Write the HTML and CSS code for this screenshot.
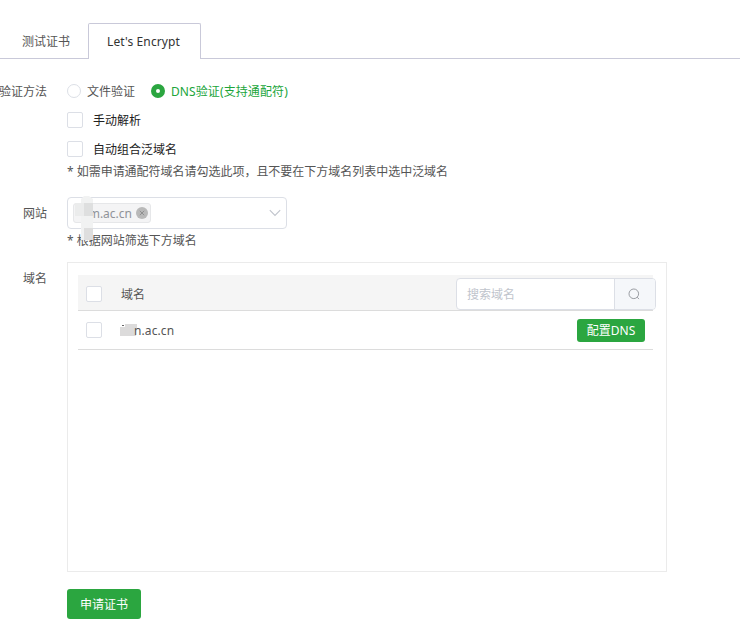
FILE: index.html
```
<!DOCTYPE html>
<html lang="zh-CN">
<head>
<meta charset="utf-8">
<title>Let's Encrypt</title>
<link rel="stylesheet" href="styles.css">
</head>
<body>
<nav class="tabs">
  <a class="tab">测试证书</a>
  <a class="tab tab-active">Let's Encrypt</a>
</nav>
<form class="form">
  <div class="row row-method">
    <div class="label">验证方法</div>
    <div class="content">
      <div class="radios">
        <span class="radio"><i class="dot"></i>文件验证</span>
        <span class="radio radio-on"><i class="dot"></i>DNS验证(支持通配符)</span>
      </div>
      <div class="check-line"><i class="check"></i><span>手动解析</span></div>
      <div class="check-line"><i class="check"></i><span>自动组合泛域名</span></div>
      <div class="hint">* 如需申请通配符域名请勾选此项，且不要在下方域名列表中选中泛域名</div>
    </div>
  </div>
  <div class="row row-site">
    <div class="label">网站</div>
    <div class="content">
      <div class="select">
        <span class="tag"><span class="tag-text">m.ac.cn</span>
          <svg class="close" viewBox="0 0 12 12"><circle cx="6" cy="6" r="6" fill="#b9b9b9"/><path d="M3.8 3.8l4.4 4.4M8.2 3.8L3.8 8.2" stroke="#858585" stroke-width=".8"/></svg>
        </span>
        <svg class="arrow" viewBox="0 0 12 8"><path d="M.8 1.2L6 6.4l5.200-5.200" fill="none" stroke="#c0c4cc" stroke-width="1.100"/></svg>
        <svg class="mask" viewBox="0 0 20 45"><path d="M7 4l3-3h5l4 3v41H7z" fill="#f1f2f2"/><path d="M1 8h9v13H1z" fill="#ebecec"/><path d="M10 8h9v13h-9z" fill="#dedfdf"/><path d="M10 33h9v12h-9z" fill="#dedede"/></svg>
      </div>
      <div class="hint">* 根据网站筛选下方域名</div>
    </div>
  </div>
  <div class="row row-domain">
    <div class="label">域名</div>
    <div class="content">
      <div class="panel">
        <div class="line head">
          <i class="check"></i><span class="name">域名</span>
          <div class="search">
            <span class="search-input">搜索域名</span>
            <span class="search-btn"><svg viewBox="0 0 12 12"><circle cx="5.800" cy="5.800" r="4.800" fill="none" stroke="#909399" stroke-width=".9"/><path d="M9.200 9.200l1.800 1.900" stroke="#909399" stroke-width=".9"/></svg></span>
          </div>
        </div>
        <div class="line item">
          <i class="check"></i><svg class="smudge" viewBox="0 0 17 13"><path d="M0 3h5V0h12v4h-1v8H0z" fill="#dcdbdb"/><path d="M2 1h2v1H2z" fill="#666"/></svg><span class="name">n.ac.cn</span>
          <button type="button" class="btn btn-small">配置DNS</button>
        </div>
      </div>
      <button type="button" class="btn btn-submit">申请证书</button>
    </div>
  </div>
</form>
</body>
</html>
```
FILE: styles.css
```
* { box-sizing: border-box; }
body {
  margin: 0;
  height: 636px;
  overflow: hidden;
  background: #fff;
  color: #555;
  font: 12px/18px "Noto Sans", "Noto Sans CJK SC", sans-serif;
}
.tabs {
  display: flex;
  height: 59px;
  padding-top: 23px;
  border-bottom: 1px solid #c9c9d9;
}
.tab {
  width: 88px;
  height: 36px;
  padding-left: 22px;
  line-height: 38px;
  white-space: nowrap;
}
.tab-active {
  width: 113px;
  padding-left: 18px;
  line-height: 36px;
  letter-spacing: .12px;
  color: #333;
  background: #fff;
  border: 1px solid #c9c9d9;
  border-bottom: 0;
  border-radius: 2px 2px 0 0;
}
.form { padding-top: 23px; }
.row { display: flex; }
.label {
  display: flex;
  justify-content: flex-end;
  flex: 0 0 47px;
  min-width: 0;
  white-space: nowrap;
}
.content { margin-left: 20px; }
.row-method .label { padding-top: 1px; }
.radios { display: flex; height: 18px; line-height: 20px; }
.radio { display: flex; align-items: flex-start; width: 84px; white-space: nowrap; }
.radio-on { color: #20a53a; width: auto; letter-spacing: .1px; }
.dot {
  width: 14px;
  height: 14px;
  margin: 2px 6px 0 0;
  border: 1px solid #dcdfe6;
  border-radius: 50%;
}
.radio-on .dot { border: 5px solid #2ba640; }
.check {
  flex: none;
  width: 16px;
  height: 16px;
  background: #fff;
  border: 1px solid #dcdfe6;
  border-radius: 2px;
}
.check-line {
  display: flex;
  align-items: center;
  gap: 10px;
  height: 16px;
  margin-top: 12px;
  color: #222;
}
.check-line span { padding-top: 2px; }
.check-line + .check-line { margin-top: 13px; }
.hint { white-space: nowrap; }
.row-method .hint { margin-top: 6px; letter-spacing: -.02px; }
.row-site { margin-top: 16px; }
.row-site .label { padding-top: 8px; }
.select {
  position: relative;
  display: flex;
  align-items: center;
  justify-content: space-between;
  width: 220px;
  height: 32px;
  padding: 0 5px;
  border: 1px solid #dcdfe6;
  border-radius: 4px;
}
.tag {
  display: flex;
  align-items: center;
  justify-content: flex-end;
  gap: 4px;
  width: 78px;
  height: 20px;
  padding-right: 2px;
  color: #909399;
  background: #f4f4f5;
  border: 1px solid #e6e7e9;
  border-radius: 3px;
}
.tag-text { padding-top: 2px; }
.close { width: 12px; height: 12px; }
.arrow { width: 12px; height: 8px; }
.mask {
  position: absolute;
  left: 6px;
  top: -3px;
  width: 20px;
  height: 45px;
}
.row-site .hint { margin-top: 3px; }
.row-domain { margin-top: 12px; }
.row-domain .label { padding-top: 8px; }
.panel {
  width: 600px;
  height: 310px;
  padding: 12px 10px;
  border: 1px solid #ebebeb;
}
.line {
  display: flex;
  align-items: center;
  width: 575px;
  padding-left: 8px;
  border-bottom: 1px solid #dcdcdc;
}
.line .name { padding-top: 2px; }
.head { height: 36px; background: #f5f5f5; padding-top: 2px; }
.head .name { margin-left: 19px; }
.search {
  display: flex;
  flex: none;
  width: 200px;
  height: 32px;
  margin-left: auto;
  margin-right: -3px;
  background: #fff;
  border: 1px solid #dcdfe6;
  border-radius: 4px;
  overflow: hidden;
}
.search-input { flex: 1; padding-left: 10px; line-height: 32px; color: #c0c4cc; }
.search-btn {
  display: flex;
  align-items: center;
  justify-content: center;
  width: 41px;
  padding-right: 2px;
  background: #f5f7fa;
  border-left: 1px solid #dcdfe6;
}
.search-btn svg { width: 12px; height: 12px; }
.item { height: 39px; }
.smudge { width: 17px; height: 13px; margin-left: 18px; }
.item .name { margin-left: -3px; letter-spacing: .1px; }
.btn {
  display: block;
  padding: 2px 0 0;
  color: #fff;
  font: inherit;
  background: #2ba640;
  border: 0;
  border-radius: 3px;
}
.btn-small { width: 68px; height: 23px; margin-left: auto; margin-right: 8px; }
.btn-submit { width: 74px; height: 30px; margin-top: 17px; }
```
